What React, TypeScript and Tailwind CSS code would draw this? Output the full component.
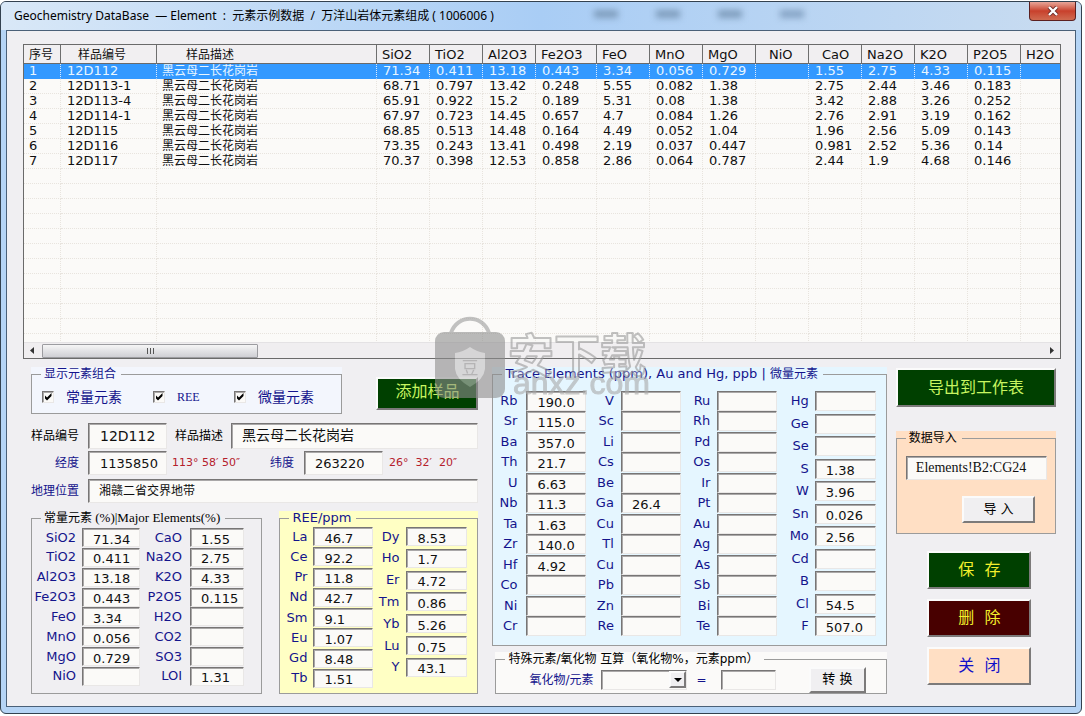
import React from "react";

const SANS = "font-['DejaVu_Sans','Noto_Sans_CJK_SC',sans-serif]";
const SUNKEN =
  "border border-t-[#777575] border-l-[#777575] border-r-[#e9e7e6] border-b-[#e9e7e6] bg-[#fbfaf8] text-[#101010] shadow-[inset_1px_1px_0_#aaa8a8] outline-none";
const RAISED =
  "border-2 border-t-[#fbfbfb] border-l-[#fbfbfb] border-r-[#7c7a7a] border-b-[#7c7a7a]";

type Column = { name: string; width: string; head: string; cell: string };

const columns: Column[] = [
  { name: "序号", width: "w-[37px]", head: "pl-[5px] text-[12px]", cell: "pl-[5px]" },
  { name: "样品编号", width: "w-[96px]", head: "pl-[17px] text-[12px]", cell: "pl-[6px]" },
  { name: "样品描述", width: "w-[220px]", head: "pl-[29px] text-[12px]", cell: "pl-[5px] text-[12px]" },
  { name: "SiO2", width: "w-[53px]", head: "pl-[5px]", cell: "pl-[6px]" },
  { name: "TiO2", width: "w-[53px]", head: "pl-[5px]", cell: "pl-[6px]" },
  { name: "Al2O3", width: "w-[53px]", head: "pl-[5px]", cell: "pl-[6px]" },
  { name: "Fe2O3", width: "w-[61px]", head: "pl-[5px]", cell: "pl-[6px]" },
  { name: "FeO", width: "w-[53px]", head: "pl-[5px]", cell: "pl-[6px]" },
  { name: "MnO", width: "w-[53px]", head: "pl-[5px]", cell: "pl-[6px]" },
  { name: "MgO", width: "w-[53px]", head: "pl-[5px]", cell: "pl-[6px]" },
  { name: "NiO", width: "w-[53px]", head: "pl-[13px]", cell: "pl-[6px]" },
  { name: "CaO", width: "w-[53px]", head: "pl-[13px]", cell: "pl-[6px]" },
  { name: "Na2O", width: "w-[53px]", head: "pl-[5px]", cell: "pl-[6px]" },
  { name: "K2O", width: "w-[53px]", head: "pl-[5px]", cell: "pl-[6px]" },
  { name: "P2O5", width: "w-[53px]", head: "pl-[5px]", cell: "pl-[6px]" },
  { name: "H2O", width: "", head: "pl-[5px]", cell: "pl-[6px]" },
];

const ROCK = "黑云母二长花岗岩";
const samples: string[][] = [
  ["1", "12D112", ROCK, "71.34", "0.411", "13.18", "0.443", "3.34", "0.056", "0.729", "", "1.55", "2.75", "4.33", "0.115", ""],
  ["2", "12D113-1", ROCK, "68.71", "0.797", "13.42", "0.248", "5.55", "0.082", "1.38", "", "2.75", "2.44", "3.46", "0.183", ""],
  ["3", "12D113-4", ROCK, "65.91", "0.922", "15.2", "0.189", "5.31", "0.08", "1.38", "", "3.42", "2.88", "3.26", "0.252", ""],
  ["4", "12D114-1", ROCK, "67.97", "0.723", "14.45", "0.657", "4.7", "0.084", "1.26", "", "2.76", "2.91", "3.19", "0.162", ""],
  ["5", "12D115", ROCK, "68.85", "0.513", "14.48", "0.164", "4.49", "0.052", "1.04", "", "1.96", "2.56", "5.09", "0.143", ""],
  ["6", "12D116", ROCK, "73.35", "0.243", "13.41", "0.498", "2.19", "0.037", "0.447", "", "0.981", "2.52", "5.36", "0.14", ""],
  ["7", "12D117", ROCK, "70.37", "0.398", "12.53", "0.858", "2.86", "0.064", "0.787", "", "2.44", "1.9", "4.68", "0.146", ""],
];
const blankRows = Array.from({ length: 12 }, () => columns.map(() => ""));

type Pair = [string, string];

const majorA: Pair[] = [["SiO2", "71.34"], ["TiO2", "0.411"], ["Al2O3", "13.18"], ["Fe2O3", "0.443"], ["FeO", "3.34"], ["MnO", "0.056"], ["MgO", "0.729"], ["NiO", ""]];
const majorB: Pair[] = [["CaO", "1.55"], ["Na2O", "2.75"], ["K2O", "4.33"], ["P2O5", "0.115"], ["H2O", ""], ["CO2", ""], ["SO3", ""], ["LOI", "1.31"]];
const reeA: Pair[] = [["La", "46.7"], ["Ce", "92.2"], ["Pr", "11.8"], ["Nd", "42.7"], ["Sm", "9.1"], ["Eu", "1.07"], ["Gd", "8.48"], ["Tb", "1.51"]];
const reeB: Pair[] = [["Dy", "8.53"], ["Ho", "1.7"], ["Er", "4.72"], ["Tm", "0.86"], ["Yb", "5.26"], ["Lu", "0.75"], ["Y", "43.1"]];
const traceA: Pair[] = [["Rb", "190.0"], ["Sr", "115.0"], ["Ba", "357.0"], ["Th", "21.7"], ["U", "6.63"], ["Nb", "11.3"], ["Ta", "1.63"], ["Zr", "140.0"], ["Hf", "4.92"], ["Co", ""], ["Ni", ""], ["Cr", ""]];
const traceB: Pair[] = [["V", ""], ["Sc", ""], ["Li", ""], ["Cs", ""], ["Be", ""], ["Ga", "26.4"], ["Cu", ""], ["Tl", ""], ["Cu", ""], ["Pb", ""], ["Zn", ""], ["Re", ""]];
const traceC: Pair[] = [["Ru", ""], ["Rh", ""], ["Pd", ""], ["Os", ""], ["Ir", ""], ["Pt", ""], ["Au", ""], ["Ag", ""], ["As", ""], ["Sb", ""], ["Bi", ""], ["Te", ""]];
const traceD: Pair[] = [["Hg", ""], ["Ge", ""], ["Se", ""], ["S", "1.38"], ["W", "3.96"], ["Sn", "0.026"], ["Mo", "2.56"], ["Cd", ""], ["B", ""], ["Cl", "54.5"], ["F", "507.0"]];

function FieldColumn({ items, size, gap, field }: { items: Pair[]; size: string; gap: string; field: string }) {
  return (
    <div className={`flex flex-col justify-between ${size}`}>
      {items.map(([name, value], i) => (
        <label key={i} className={`flex items-center justify-end text-[13px] leading-[16px] text-[#14148c] ${gap}`}>
          <span>{name}</span>
          <input type="text" defaultValue={value} className={`shrink-0 pt-[3px] pl-[10px] text-[13px] leading-[14px] ${SUNKEN} ${field}`} />
        </label>
      ))}
    </div>
  );
}

function Group({ title, wrap, legend, children }: { title: React.ReactNode; wrap: string; legend: string; children: React.ReactNode }) {
  return (
    <div className={wrap}>
      <fieldset className="border border-[#9b9b9b]">
        <legend className={`ml-[9px] h-[14px] pr-[5px] pl-[3px] leading-[14px] whitespace-nowrap ${legend}`}>{title}</legend>
        {children}
      </fieldset>
    </div>
  );
}

function Check({ text, className }: { text: string; className: string }) {
  return (
    <label className={`flex items-center gap-[12px] text-[#14148c] ${className}`}>
      <span className="grid">
        <input type="checkbox" defaultChecked className={`peer col-start-1 row-start-1 size-[12px] appearance-none ${SUNKEN}`} />
        <svg viewBox="0 0 12 12" className="pointer-events-none invisible col-start-1 row-start-1 size-[12px] peer-checked:visible">
          <path d="M3 4.5v3l2 2 4.5-4.5v-3L5 6.5z" fill="#000" />
        </svg>
      </span>
      {text}
    </label>
  );
}

function SampleTable() {
  return (
    <div className="overflow-hidden border border-[#6a6a6a] bg-[#fbfaf8]">
      <div className="h-[297px] overflow-hidden">
        <table className="w-full table-fixed border-separate border-spacing-0 text-[13px] whitespace-nowrap text-[#101010]">
          <thead>
            <tr>
              {columns.map((c, i) => (
                <th
                  key={i}
                  className={`h-[19px] border-r border-b border-r-[#6e6e6e] border-b-[#6a6a6a] bg-[#f1eff1] p-0 pt-px text-left leading-[16px] font-normal last:border-r-0 ${c.width} ${c.head}`}
                >
                  {c.name}
                </th>
              ))}
            </tr>
          </thead>
          <tbody>
            {[...samples, ...blankRows].map((row, r) => (
              <tr key={r} className={r === 0 ? "bg-[#3399ff] text-[#e8f6ff]" : ""}>
                {row.map((v, i) => (
                  <td
                    key={i}
                    className={`h-[15px] border-r border-b border-dotted p-0 leading-[14px] last:border-r-0 ${r === 0 ? "border-r-[#dcecff] border-b-[#3399ff]" : "border-[#e8e4de]"} ${columns[i].cell}`}
                  >
                    {v}
                  </td>
                ))}
              </tr>
            ))}
          </tbody>
        </table>
      </div>
      <div className="flex h-[16px] items-center border-t border-[#e4e2e4] bg-[#f0eef0] px-[6px]">
        <svg viewBox="0 0 4 7" className="h-[7px] w-[4px]"><path d="M4 0v7L0 3.5z" fill="#333" /></svg>
        <div className="ml-[8px] flex h-[14px] w-[216px] items-center justify-center gap-[2px] rounded-[1px] border border-[#9c9ca0] bg-linear-to-b from-[#f6f6f6] via-[#e2e2e5] to-[#cfcfd4]">
          <span className="h-[6px] w-px bg-[#555]" />
          <span className="h-[6px] w-px bg-[#555]" />
          <span className="h-[6px] w-px bg-[#555]" />
        </div>
        <svg viewBox="0 0 4 7" className="ml-auto h-[7px] w-[4px]"><path d="M0 0v7l4-3.500z" fill="#333" /></svg>
      </div>
    </div>
  );
}

function SampleForm() {
  return (
    <div className="grid grid-cols-[57px_1fr] items-center text-[12px] text-[#14148c]">
      <label htmlFor="sample-no" className="text-black">样品编号</label>
      <div className="flex items-center">
        <input id="sample-no" type="text" defaultValue="12D112" className={`h-[26px] w-[79px] pl-[11px] text-[14px] ${SUNKEN}`} />
        <label htmlFor="sample-desc" className="mx-[8px] text-black">样品描述</label>
        <input id="sample-desc" type="text" defaultValue={ROCK} className={`h-[26px] min-w-0 flex-1 pb-[4px] pl-[10px] text-[14px] ${SUNKEN}`} />
      </div>
      <label htmlFor="longitude" className="mt-[2px] pr-[9px] text-right">经度</label>
      <div className="mt-[2px] flex items-center">
        <input id="longitude" type="text" defaultValue="1135850" className={`h-[24px] w-[79px] pl-[11px] text-[13px] ${SUNKEN}`} />
        <span className="w-[103px] pl-[5px] text-[11px] text-[#b5202c]">113° 58′ 50″</span>
        <label htmlFor="latitude" className="w-[34px]">纬度</label>
        <input id="latitude" type="text" defaultValue="263220" className={`h-[24px] w-[79px] pl-[10px] text-[13px] ${SUNKEN}`} />
        <span className="pl-[6px] text-[11px] whitespace-pre text-[#b5202c]">26°  32′  20″</span>
      </div>
      <label htmlFor="place" className="mt-[4px]">地理位置</label>
      <input id="place" type="text" defaultValue="湘赣二省交界地带" className={`mt-[4px] h-[24px] w-full min-w-0 pb-[4px] pl-[10px] text-[12px] ${SUNKEN}`} />
    </div>
  );
}

function Watermark() {
  return (
    <svg viewBox="0 0 230 100" className="pointer-events-none absolute top-[313px] left-[432px] h-[100px] w-[230px] opacity-60" aria-hidden="true">
      <path d="M18 18C24 -1 50 -1 56 18" fill="none" stroke="#9c9c9c" strokeWidth="4" />
      <rect x="2" y="17" width="70" height="66" rx="9" fill="#8e8e8e" />
      <path d="M22 38q8-1 15-6q7 5 15 6v16q-1 10-15 18q-14-8-15-18z" fill="#c6c6c6" />
      <text x="37" y="59" textAnchor="middle" fontSize="17" fill="#8e8e8e" fontFamily="Noto Sans CJK SC, sans-serif">豆</text>
      <text x="75" y="57" fontSize="46" fontWeight="700" fill="#f4f4f4" fillOpacity=".5" stroke="#9a9a9a" strokeWidth="2" strokeLinejoin="round" fontFamily="Noto Sans CJK SC, sans-serif">安下载</text>
      <text x="80" y="79" fontSize="32" fill="#a9a9a9" stroke="#a9a9a9" fontFamily="Liberation Sans, sans-serif">anxz.com</text>
    </svg>
  );
}

export default function App() {
  return (
    <main className={`min-w-[1085px] bg-white pt-px pr-[3px] pb-[2px] ${SANS}`}>
      <div className="relative flex flex-col overflow-hidden rounded-[6px] border border-[#33414f] bg-[#b5d4f5]">
        <header className="relative flex h-[28px] items-start justify-between bg-linear-to-r from-[#d9e8f7] via-[#a9cdf5] to-[#c9dcf0]">
          <div className="absolute top-[8px] left-[593px] flex gap-[38px] blur-[3px]" aria-hidden="true">
            <span className="h-[8px] w-[24px] bg-[#7f9dbd]" />
            <span className="h-[8px] w-[24px] bg-[#7f9dbd]" />
            <span className="h-[8px] w-[24px] bg-[#7f9dbd]" />
            <span className="h-[8px] w-[24px] bg-[#86a4c5]" />
          </div>
          <h1 className="pt-[5px] pl-[13px] font-['Noto_Sans','Noto_Sans_CJK_SC',sans-serif] text-[12px] leading-[18px] whitespace-pre text-black">
            Geochemistry DataBase  — Element  :  元素示例数据  /  万洋山岩体元素组成 ( 1006006 )
          </h1>
          <button type="button" aria-label="关闭窗口" className="mr-[5px] flex h-[19px] w-[47px] items-center justify-center rounded-b-[4px] border border-t-0 border-[#5b2020] bg-linear-to-b from-[#e6a498] via-[#c8402c] to-[#cf6a50]">
            <svg viewBox="0 0 12 10" className="h-[10px] w-[12px]">
              <path d="M2 1l8 8M10 1l-8 8" stroke="#6b2a26" strokeWidth="4" />
              <path d="M2 1l8 8M10 1l-8 8" stroke="#fff" strokeWidth="2.400" />
            </svg>
          </button>
        </header>

        <div className="mx-[5px] mb-[6px] border border-[#4a6078] bg-[#f0eff2] pt-[13px] pr-[14px] pb-[12px] pl-[16px]">
          <SampleTable />

          <div className="mt-[8px] grid grid-cols-[452fr_394fr_160fr] gap-x-[9px] pr-[5px] pl-[8px]">
            <section className="flex flex-col pr-[5px]">
              <div className="flex items-end justify-between">
                <Group title="显示元素组合" wrap="w-[311px] bg-[#f3f6fd]" legend="text-[12px] text-[#14148c]">
                  <div className="flex h-[32px] items-center pl-[10px] text-[14px]">
                    <Check text="常量元素" className="w-[111px]" />
                    <Check text="REE" className="w-[81px] font-['Liberation_Serif',serif] text-[12px]" />
                    <Check text="微量元素" className="" />
                  </div>
                </Group>
                <button type="button" className={`mb-[4px] h-[33px] w-[102px] bg-[#004000] pb-[3px] text-[16px] leading-none text-[#c8f560] ${RAISED}`}>添加样品</button>
              </div>

              <div className="mt-[9px]">
                <SampleForm />
              </div>

              <div className="mt-[8px] flex items-start justify-between">
                <Group
                  title={<>常量元素<span className="font-['Liberation_Serif',serif] text-[13px]"> (%)|Major Elements(%)</span></>}
                  wrap="w-[231px]"
                  legend="text-[12px] text-black"
                >
                  <div className="flex gap-x-[2px] pt-[3px] pb-[7px]">
                    <FieldColumn items={majorA} size="h-[158px] w-[108px]" gap="gap-[6px]" field="h-[19px] w-[58px]" />
                    <FieldColumn items={majorB} size="h-[158px] w-[102px]" gap="gap-[8px]" field="h-[19px] w-[54px]" />
                  </div>
                </Group>
                <Group title="REE/ppm" wrap="w-[199px] bg-[#ffffc4]" legend="text-[13px] text-[#14148c]">
                  <div className="flex items-start gap-x-[2px] pt-[2px] pb-[5px]">
                    <FieldColumn items={reeA} size="h-[161px] w-[93px]" gap="gap-[6px]" field="h-[19px] w-[60px]" />
                    <FieldColumn items={reeB} size="h-[150px] w-[92px]" gap="gap-[7px]" field="h-[19px] w-[61px]" />
                  </div>
                </Group>
              </div>
            </section>

            <section className="flex flex-col">
              <Group
                title={<>Trace Elements (ppm), Au and Hg, ppb | <span className="text-[12px]">微量元素</span></>}
                wrap="bg-[#e5f6ff]"
                legend="text-[13px] text-[#14148c]"
              >
                <div className="flex justify-between pt-[10px] pr-[10px] pb-[9px] pl-[3px]">
                  <FieldColumn items={traceA} size="h-[245px] w-[90px]" gap="gap-[9px]" field="h-[20px] w-[60px]" />
                  <FieldColumn items={traceB} size="h-[245px] w-[94px]" gap="gap-[7px]" field="h-[20px] w-[60px]" />
                  <FieldColumn items={traceC} size="h-[245px] w-[96px]" gap="gap-[7px]" field="h-[20px] w-[60px]" />
                  <FieldColumn items={traceD} size="h-[245px] w-[98px]" gap="gap-[6px]" field="h-[20px] w-[61px]" />
                </div>
              </Group>

              <Group
                title={<>特殊元素/氧化物 互算（氧化物%，元素ppm）</>}
                wrap="mt-[6px] ml-[3px] bg-[#fbfaf9]"
                legend="text-[12px] text-black"
              >
                <div className="flex h-[27px] items-center pr-[20px] pl-[33px] text-[12px] text-[#14148c]">
                  <label htmlFor="oxide">氧化物/元素</label>
                  <div className="ml-[8px] grid">
                    <select id="oxide" className={`col-start-1 row-start-1 h-[20px] w-[86px] appearance-none text-[12px] ${SUNKEN}`}>
                      <option value=""></option>
                    </select>
                    <span className={`pointer-events-none col-start-1 row-start-1 mr-px flex h-[17px] w-[17px] items-center justify-center self-center justify-self-end bg-[#f0eff1] ${RAISED}`}>
                      <svg viewBox="0 0 8 4" className="h-[4px] w-[8px]"><path d="M0 0h8L4 4z" fill="#000" /></svg>
                    </span>
                  </div>
                  <label htmlFor="converted" className="w-[34px] pl-[9px]">=</label>
                  <input id="converted" type="text" className={`h-[20px] w-[55px] ${SUNKEN}`} />
                  <button type="button" className={`ml-auto h-[26px] w-[57px] bg-[#f0eff1] pb-[3px] text-[13px] leading-none text-black ${RAISED}`}>转 换</button>
                </div>
              </Group>
            </section>

            <section className="flex flex-col items-center">
              <button type="button" className={`mt-px h-[39px] w-full bg-[#004000] text-[16px] leading-none text-[#c8f560] ${RAISED}`}>导出到工作表</button>
              <Group title="数据导入" wrap="mt-[24px] w-full bg-[#ffdfc4]" legend="text-[12px] text-black">
                <div className="flex flex-col items-end pt-[11px] pr-[8px] pb-[10px] pl-[9px]">
                  <input
                    type="text"
                    aria-label="数据导入"
                    defaultValue="Elements!B2:CG24"
                    className={`h-[24px] w-full pl-[9px] font-['Liberation_Serif',serif] text-[14px] ${SUNKEN}`}
                  />
                  <button type="button" className={`mt-[16px] mr-[12px] h-[27px] w-[73px] bg-[#f0eff1] pb-[3px] text-[13px] leading-none text-black ${RAISED}`}>导 入</button>
                </div>
              </Group>
              <div className="mt-[17px] ml-[7px] flex flex-col gap-[10px] text-[16px] leading-none whitespace-pre">
                <button type="button" className={`h-[38px] w-[104px] bg-[#004000] text-[#f4f02c] ${RAISED}`}>保  存</button>
                <button type="button" className={`h-[38px] w-[104px] bg-[#480000] text-[#f4f02c] ${RAISED}`}>删  除</button>
                <button type="button" className={`h-[38px] w-[104px] bg-[#ffdfc4] text-[#1010c8] ${RAISED}`}>关  闭</button>
              </div>
            </section>
          </div>
        </div>
        <Watermark />
      </div>
    </main>
  );
}
